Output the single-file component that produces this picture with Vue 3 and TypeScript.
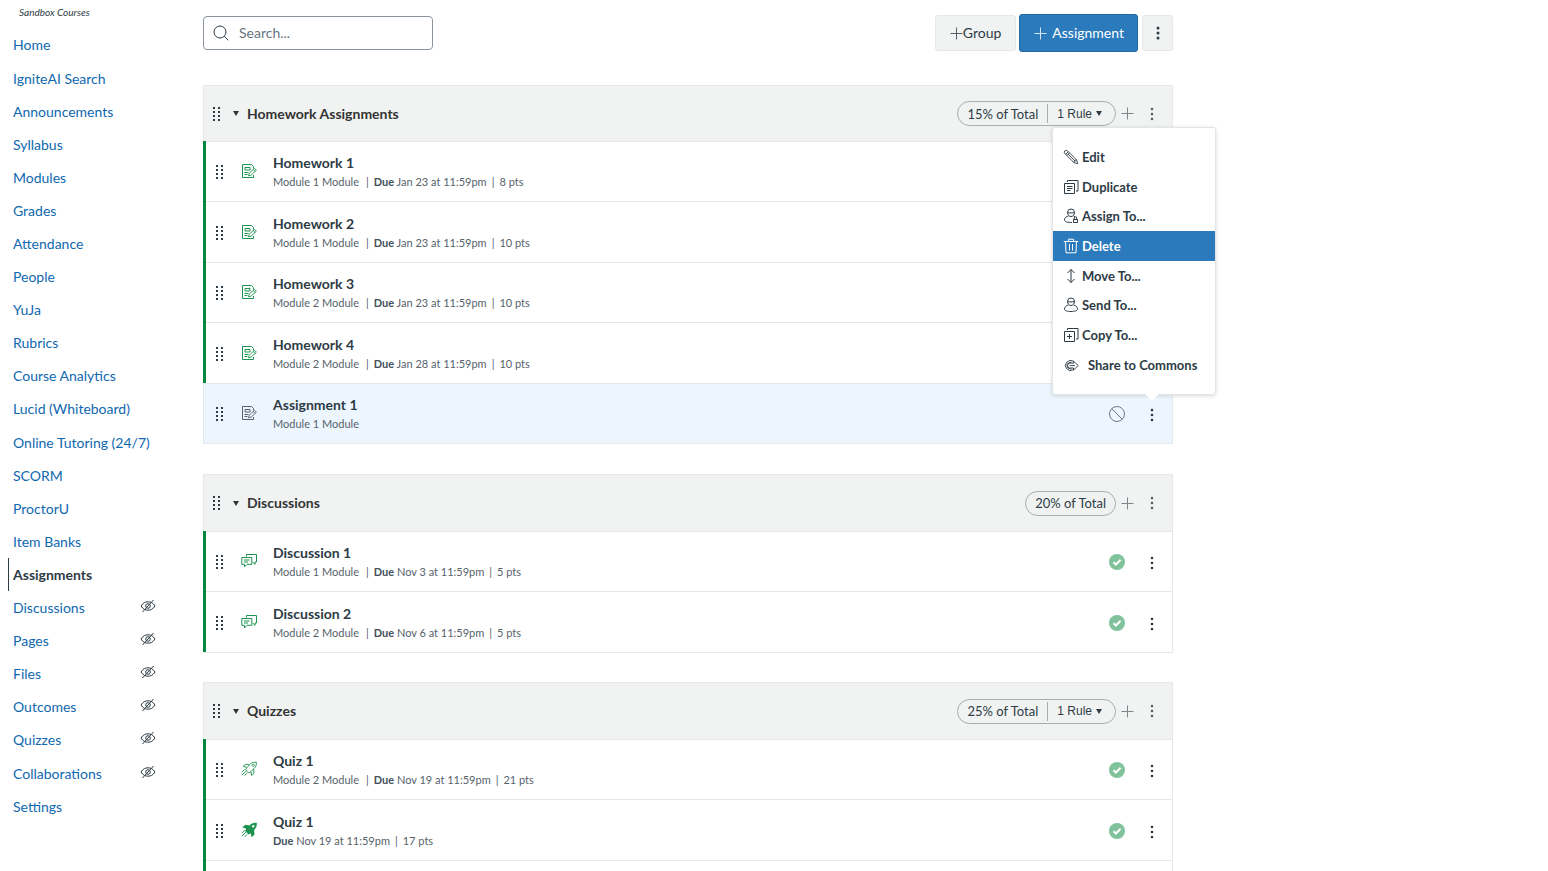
<script setup lang="ts">
import { ref } from 'vue'

interface NavItem { label: string; hidden?: boolean; active?: boolean }
interface Item {
  title: string
  kind: 'assignment' | 'discussion' | 'rocket' | 'rocketSolid'
  module?: string
  due?: string
  points?: string
  published: boolean
  menuOpen?: boolean
}
interface Group { name: string; weight: string; rule?: string; loading?: boolean; items: Item[] }

const navGroups: NavItem[][] = [
  [{ label: 'Home' }],
  [
    { label: 'IgniteAI Search' }, { label: 'Announcements' }, { label: 'Syllabus' },
    { label: 'Modules' }, { label: 'Grades' }, { label: 'Attendance' }, { label: 'People' },
    { label: 'YuJa' }, { label: 'Rubrics' }, { label: 'Course Analytics' }, { label: 'Lucid (Whiteboard)' },
  ],
  [
    { label: 'Online Tutoring (24/7)' }, { label: 'SCORM' }, { label: 'ProctorU' }, { label: 'Item Banks' },
    { label: 'Assignments', active: true }, { label: 'Discussions', hidden: true },
    { label: 'Pages', hidden: true }, { label: 'Files', hidden: true },
    { label: 'Outcomes', hidden: true }, { label: 'Quizzes', hidden: true },
  ],
  [{ label: 'Collaborations', hidden: true }, { label: 'Settings' }],
]

const groups: Group[] = [
  {
    name: 'Homework Assignments', weight: '15% of Total', rule: '1 Rule',
    items: [
      { title: 'Homework 1', kind: 'assignment', module: 'Module 1 Module', due: 'Jan 23 at 11:59pm', points: '8 pts', published: true },
      { title: 'Homework 2', kind: 'assignment', module: 'Module 1 Module', due: 'Jan 23 at 11:59pm', points: '10 pts', published: true },
      { title: 'Homework 3', kind: 'assignment', module: 'Module 2 Module', due: 'Jan 23 at 11:59pm', points: '10 pts', published: true },
      { title: 'Homework 4', kind: 'assignment', module: 'Module 2 Module', due: 'Jan 28 at 11:59pm', points: '10 pts', published: true },
      { title: 'Assignment 1', kind: 'assignment', module: 'Module 1 Module', published: false, menuOpen: true },
    ],
  },
  {
    name: 'Discussions', weight: '20% of Total',
    items: [
      { title: 'Discussion 1', kind: 'discussion', module: 'Module 1 Module', due: 'Nov 3 at 11:59pm', points: '5 pts', published: true },
      { title: 'Discussion 2', kind: 'discussion', module: 'Module 2 Module', due: 'Nov 6 at 11:59pm', points: '5 pts', published: true },
    ],
  },
  {
    name: 'Quizzes', weight: '25% of Total', rule: '1 Rule', loading: true,
    items: [
      { title: 'Quiz 1', kind: 'rocket', module: 'Module 2 Module', due: 'Nov 19 at 11:59pm', points: '21 pts', published: true },
      { title: 'Quiz 1', kind: 'rocketSolid', due: 'Nov 19 at 11:59pm', points: '17 pts', published: true },
    ],
  },
]

const menu = ['Edit', 'Duplicate', 'Assign To...', 'Delete', 'Move To...', 'Send To...', 'Copy To...', 'Share to Commons']
const current = ref('Delete')
const query = ref('')
</script>

<template>
  <div class="page">
    <aside class="side">
      <p class="term">Sandbox Courses</p>
      <nav class="nav" aria-label="Course navigation">
        <ul v-for="(g, gi) in navGroups" :key="gi">
          <li v-for="n in g" :key="n.label" :class="{ active: n.active }">
            <a href="#">{{ n.label }}</a>
            <svg v-if="n.hidden" class="eye" viewBox="0 0 16 16" width="16" height="16" fill="none" stroke="currentColor">
              <path d="M1 8C3 4.800 5.400 3.800 8 3.800S13 4.800 15 8C13 11.200 10.600 12.200 8 12.200S3 11.200 1 8Z" />
              <circle cx="8" cy="8" r="2.300" />
              <path d="M2.500 14 13.500 2" />
            </svg>
          </li>
        </ul>
      </nav>
    </aside>

    <main class="main">
      <div class="toolbar">
        <label class="search">
          <svg viewBox="0 0 16 16" width="16" height="16" fill="none" stroke="currentColor">
            <circle cx="7" cy="7" r="6" /><path d="m11.300 11.300 4 4" />
          </svg>
          <input v-model="query" type="text" placeholder="Search..." aria-label="Search assignments" />
        </label>
        <div class="actions">
          <button class="btn group-btn" type="button">
            <svg class="plus" viewBox="0 0 13 13" width="13" height="13" fill="none" stroke="currentColor"><path d="M6.500 .5v12M.5 6.500h12" /></svg>Group
          </button>
          <button class="btn primary" type="button">
            <svg class="plus" viewBox="0 0 13 13" width="13" height="13" fill="none" stroke="currentColor"><path d="M6.500 .5v12M.5 6.500h12" /></svg>Assignment
          </button>
          <button class="btn more-btn" type="button" aria-label="More options">
            <svg viewBox="0 0 4 14" width="4" height="14" fill="currentColor"><circle cx="2" cy="2" r="1.500" /><circle cx="2" cy="7" r="1.500" /><circle cx="2" cy="12" r="1.500" /></svg>
          </button>
        </div>
      </div>

      <section v-for="g in groups" :key="g.name" class="group">
        <header class="head">
          <svg viewBox="0 0 8 16" width="8" height="16" fill="currentColor">
            <path d="M0 1h2v2H0zM5 1h2v2H5zM0 5h2v2H0zM5 5h2v2H5zM0 9h2v2H0zM5 9h2v2H5zM0 13h2v2H0zM5 13h2v2H5z" />
          </svg>
          <button class="toggle" type="button" aria-expanded="true">
            <svg viewBox="0 0 6 5" width="6" height="5" fill="currentColor"><path d="M0 0h6L3 5z" /></svg>
            <span>{{ g.name }}</span>
          </button>
          <div class="pill">
            <span>{{ g.weight }}</span>
            <button v-if="g.rule" type="button" class="rule">
              {{ g.rule }}<svg viewBox="0 0 6 5" width="6" height="5" fill="currentColor"><path d="M0 0h6L3 5z" /></svg>
            </button>
          </div>
          <button class="icon add" type="button" :aria-label="'Add to ' + g.name">
            <svg viewBox="0 0 13 13" width="13" height="13" fill="none" stroke="currentColor"><path d="M6.500 .5v12M.5 6.500h12" /></svg>
          </button>
          <button class="icon kebab" type="button" :aria-label="'Options for ' + g.name">
            <svg viewBox="0 0 4 14" width="4" height="14" fill="currentColor"><circle cx="2" cy="2" r="1.300" /><circle cx="2" cy="7" r="1.300" /><circle cx="2" cy="12" r="1.300" /></svg>
          </button>
        </header>

        <ul>
          <li v-for="(it, i) in g.items" :key="i" class="row" :class="{ draft: !it.published }">
            <svg viewBox="0 0 8 16" width="8" height="16" fill="currentColor">
              <path d="M0 1h2v2H0zM5 1h2v2H5zM0 5h2v2H0zM5 5h2v2H5zM0 9h2v2H0zM5 9h2v2H5zM0 13h2v2H0zM5 13h2v2H5z" />
            </svg>
            <svg class="kind" viewBox="0 0 16 16" width="16" height="16" fill="none" stroke="currentColor">
              <template v-if="it.kind === 'assignment'">
                <path d="M12.500 5.500V3.500L10.500 1.500H1.500v13h11v-2.500M4 4.500h5v2.500H4zM3.500 9.500h4M3.500 11.500h3" />
                <path stroke-width=".9" d="m7.500 12.800.7-2.600 5.300-4.900 1.900 1.900-5.300 4.900zM12.200 6.500l1.900 1.900" />
              </template>
              <template v-else-if="it.kind === 'discussion'">
                <path d="M5.500 3.500V1.500h10v7.500h-1.500v2.300L11.700 9M.8 4.500h10v6.800H6l-2.500 2.700v-2.700H.8zM3 7h5.500M3 9h4" />
              </template>
              <template v-else-if="it.kind === 'rocket'">
                <path stroke-width=".9" d="M15.300 1.200C12 1 10.200 1.800 8.500 3.800L5 3.200 2.200 5.200l3.700 1.400-1.400 2.200 3.200 3.200L9.900 10.600l.8 3.900 2.300-2.400-.4-4.200C14.800 6 15.600 4.300 15.300 1.200ZM5.900 6.600l2.600-2.800M9.900 10.600l2.700-2.700M3.600 8.500.9 11M4.800 10.200.8 14.200M6.200 11.800 3.600 14.500" />
                <circle cx="12.200" cy="4.300" r="1.100" stroke-width=".8" />
              </template>
              <template v-else>
                <path fill="currentColor" stroke="none" d="M15.800.8C12 .6 10.200 1.600 8.500 3.400L4.600 2.800 1.200 5.300l4 1.500L4 9l3.600 3.600 2-1.300 1 4 2.900-2.900-.4-4.500C15.200 6 16 4.300 15.800.8Z" />
                <path d="M3.600 8.500.9 11M4.800 10.200.8 14.200M6.200 12.300 3.600 14.900" />
                <circle cx="12.200" cy="4.300" r="1.200" fill="#fff" stroke="none" />
              </template>
            </svg>
            <div class="info">
              <a href="#" class="title">{{ it.title }}</a>
              <div class="meta">
                <span v-if="it.module" class="module">{{ it.module }}</span>
                <span v-if="it.module && it.due" class="bar">|</span>
                <span v-if="it.due"><b>Due</b> {{ it.due }}</span>
                <span v-if="it.points" class="bar">|</span>
                <span v-if="it.points">{{ it.points }}</span>
              </div>
            </div>
            <button class="icon" type="button" :aria-label="it.published ? 'Published' : 'Unpublished'">
              <svg v-if="it.published" viewBox="0 0 16 16" width="16" height="16"><circle cx="8" cy="8" r="8" fill="#7fc29b" /><path d="m4.500 8.300 2.400 2.200 4.700-4.800" fill="none" stroke="#fff" stroke-width="2" /></svg>
              <svg v-else viewBox="0 0 16 16" width="16" height="16" fill="none" stroke="#6f7a83"><circle cx="8" cy="8" r="7.500" /><path d="m2.700 2.700 10.600 10.600" /></svg>
            </button>
            <div class="kebab-wrap">
              <button class="icon" type="button" :aria-label="'Options for ' + it.title">
                <svg viewBox="0 0 4 14" width="4" height="14" fill="currentColor"><circle cx="2" cy="2" r="1.300" /><circle cx="2" cy="7" r="1.300" /><circle cx="2" cy="12" r="1.300" /></svg>
              </button>
              <div v-if="it.menuOpen" class="menu" role="menu">
                <button v-for="m in menu" :key="m" type="button" role="menuitem" :class="{ current: m === current }" @mouseenter="current = m">
                  <svg viewBox="0 0 16 16" width="16" height="16" fill="none" stroke="currentColor">
                    <path v-if="m === 'Edit'" stroke-width=".9" d="M1.200 3.800Q1 1.200 3.800 1.200L13.600 11 14.800 14.800 11 13.600ZM2.700 5.300l2.600-2.600M3.900 6.500l2.600-2.600M4.800 4.800l7.500 7.500M11 13.600l.2-1.500 1-.9 1.400-.2" />
                    <path v-else-if="m === 'Duplicate'" d="M1.500 4.500h10v10h-10zM4.500 3V1.500h10.500v10.500H13M4 7.500h5.500M4 9.500h5.500M4 11.500h3.500" />
                    <template v-else-if="m === 'Assign To...'">
                      <path d="M4.500 4.500a3.500 3.500 0 0 1 7 0c0 2-1.500 4-3.500 4s-3.500-2-3.500-4ZM4.500 4.500c2 .7 5 .5 7 0M5.500 8C3 8.500 1.500 10 1.500 12.200c0 1.500 3 2.300 7.500 2.300M10.500 8l1.500.6" />
                      <path d="M10.500 11.500h4v3h-4zM11.300 11.500V10a1.200 1.200 0 0 1 2.400 0v1.500" />
                    </template>
                    <path v-else-if="m === 'Delete'" d="M.8 3.500h14.400M5.500 3.500V1.200h5v2.300M2.500 3.500l.5 11.300h10l.5-11.300M6.500 6v6.500M9.500 6v6.500" />
                    <path v-else-if="m === 'Move To...'" d="M8 1.500v13M4.500 5 8 1.500 11.500 5M4.500 11 8 14.500 11.500 11" />
                    <path v-else-if="m === 'Send To...'" d="M4.500 4.500a3.500 3.500 0 0 1 7 0c0 2-1.500 4-3.500 4s-3.500-2-3.500-4ZM4.500 4.500c2 .7 5 .5 7 0M5.500 8C3 8.500 1.500 10 1.500 12.200c0 1.500 3 2.300 6.500 2.300s6.500-.8 6.500-2.300C14.500 10 13 8.500 10.500 8" />
                    <path v-else-if="m === 'Copy To...'" d="M1.500 4.500h10v10h-10zM4.500 3V1.500h10.500v10.500H13M6.500 7v5M4 9.500h5" />
                    <path v-else stroke-width=".9" d="M10.500 4.200A5.400 5 0 1 0 10.500 12.800M10.500 6.200H6.300a2.400 2.400 0 0 0 0 4.800h4.200v2L15.300 8.600 10.500 4.200ZM12 8.600H6.500M8.500 5A4 3.600 0 1 0 8.500 12.200" />
                  </svg>
                  <span :class="{ far: m === 'Share to Commons' }">{{ m }}</span>
                </button>
              </div>
            </div>
          </li>
          <li v-if="g.loading" class="row" aria-hidden="true"></li>
        </ul>
      </section>
    </main>
  </div>
</template>

<style>
body { background: #fff; }
</style>

<style scoped>
.page { display: flex; height: 100vh; overflow: hidden; color: #2d3b45; font-family: Lato, "Liberation Sans", sans-serif; font-size: 14px; line-height: 20px; }
button { font: inherit; color: inherit; background: none; border: 0; padding: 0; margin: 0; display: flex; align-items: center; cursor: pointer; }
ul { list-style: none; margin: 0; padding: 0; }
svg { flex: none; display: block; }

.side { flex: none; width: 203px; box-sizing: border-box; padding: 4px 47px 0 8px; }
.term { margin: 0 0 8px; padding-left: 11px; font-size: 10px; line-height: 16px; font-style: italic; }
.nav { display: flex; flex-direction: column; gap: 1px; }
.nav li { display: flex; align-items: center; justify-content: space-between; height: 33px; padding-left: 5px; }
.nav a { color: #0f68b0; text-decoration: none; white-space: nowrap; }
.nav li.active { border-left: 1px solid #2d3b45; padding-left: 4px; }
.nav li.active a { color: #2d3b45; font-weight: 700; }
.eye { margin-bottom: 3px; }

.main { flex: 1; min-width: 0; max-width: 970px; padding-top: 14px; }
.toolbar { display: flex; justify-content: space-between; align-items: center; height: 38px; margin-bottom: 33px; }
.search { display: flex; align-items: center; gap: 10px; box-sizing: border-box; width: 230px; height: 34px; padding: 0 9px; border: 1px solid #8b95a0; border-radius: 4px; }
.search input { flex: 1; min-width: 0; border: 0; outline: 0; padding: 0; font: inherit; color: #2d3b45; background: none; }
.search input::placeholder { color: #66747f; opacity: 1; }
.actions { display: flex; align-items: center; gap: 4px; }
.btn { box-sizing: border-box; height: 36px; border: 1px solid #e6e8e8; border-radius: 3px; background: #f1f3f3; }
.plus { opacity: 0.8; }
.group-btn { padding: 0 14px; margin-right: -1px; }
.primary { height: 38px; padding: 0 13px 0 14px; gap: 5px; color: #fff; background: #2b7abc; border-color: #2369a4; }
.more-btn { width: 31px; justify-content: center; }

.group { margin-bottom: 29px; border: 1px solid #e6e8e9; border-left: 0; }
.head { display: flex; align-items: center; height: 56px; padding: 0 12px 0 9px; background: #f1f3f3; border-left: 1px solid #e6e8e9; }
.group:first-of-type { margin-bottom: 30px; }
.group:first-of-type .head { height: 55px; }
.toggle { gap: 8px; margin-left: 12px; margin-right: auto; font-weight: 700; color: #333; }
.pill { display: flex; align-items: center; height: 23px; border: 1px solid #a9adb0; border-radius: 13px; padding: 0 9px; font-size: 13px; }
.rule { gap: 4px; height: 19px; margin-left: 9px; padding: 0 4px 0 9px; border-left: 1px solid #a9adb0; font-family: "Liberation Sans", sans-serif; font-size: 12px; }
.icon { justify-content: center; width: 16px; height: 24px; }
.add { width: 22px; color: #7d868d; }
.head .kebab { margin-left: 6px; color: #56626b; }

.row { display: flex; align-items: center; box-sizing: border-box; height: 60px; padding: 2px 12px 0 13px; box-shadow: inset 0 1px 0 rgba(45, 59, 69, 0.12), inset 3px 0 0 #03893d; }
.row:nth-child(even) { height: 61px; }
.row.draft { background: #edf6ff; box-shadow: inset 0 1px 0 #e1e7ec, inset 1px 0 0 #e1e7ec; }
.kind { margin: 0 0 2px 17px; color: #1c944f; }
.draft .kind { color: #56626b; }
.info { margin-left: 16px; margin-right: auto; }
.title { display: block; color: #2d3b45; font-weight: 700; text-decoration: none; line-height: 20px; }
.meta { display: flex; font-size: 11px; line-height: 18px; color: #56626b; white-space: nowrap; }
.meta b { color: #44515b; }
.module { margin-right: 2px; }
.bar { margin: 0 5px; }
.kebab-wrap { position: relative; margin: 2px 0 0 19px; }

.menu { position: absolute; z-index: 5; right: -56px; bottom: 32px; box-sizing: border-box; width: 164px; padding: 14px 0 15px; background: #fff; border: 1px solid #e2e4e6; border-radius: 3px; box-shadow: 0 1px 4px rgba(0, 0, 0, 0.14); }
.menu::after { content: ""; position: absolute; top: 100%; right: 56px; border: 7px solid transparent; border-top-color: #fff; border-bottom: 0; }
.menu button { width: 100%; height: 30px; padding-left: 10px; gap: 3px; font-size: 13px; font-weight: 700; white-space: nowrap; }
.menu button:nth-child(3n + 2) { height: 29px; }
.menu .current { background: #2b7abc; color: #fff; }
.far { margin-left: 6px; }
</style>
